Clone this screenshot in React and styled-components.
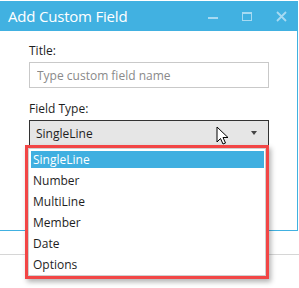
import { createGlobalStyle, styled } from "styled-components";

const GlobalStyle = createGlobalStyle`
  html, body {
    margin: 0;
    padding: 0;
    background: #ffffff;
  }
  body {
    font-family: "Open Sans", "Noto Sans", sans-serif;
    color: #1e1e1e;
  }
`;

const BLUE = "#41b1e1";

const options = ["SingleLine", "Number", "MultiLine", "Member", "Date", "Options"];

// ウィンドウ右上のボタン類
const WindowControls = () => (
  <SControls>
    <svg width="10" height="12" viewBox="0 0 10 12">
      <rect x="0" y="6" width="10" height="2" fill="#a6daf2" />
    </svg>
    <svg width="10" height="10" viewBox="0 0 10 10">
      <rect x="0.5" y="0.5" width="9" height="8" fill="none" stroke="#a6daf2" />
      <rect x="0" y="0" width="10" height="2" fill="#a6daf2" />
    </svg>
    <svg width="11" height="11" viewBox="0 0 11 11">
      <path d="M1 1 L10 10 M10 1 L1 10" stroke="#a6daf2" strokeWidth="1.8" />
    </svg>
  </SControls>
);

const Cursor = () => (
  <SCursor width="14" height="20" viewBox="0 0 14 20">
    <path
      d="M1 1 L1 16 L4.5 12.5 L7 18 L9.5 17 L7 11.5 L12 11.5 Z"
      fill="#ffffff"
      stroke="#000000"
      strokeWidth="1"
      strokeLinejoin="round"
    />
  </SCursor>
);

export default function App() {
  return (
    <>
      <GlobalStyle />
      <SPage>
        <SWindow>
          <STitleBar>
            <STitle>Add Custom Field</STitle>
            <WindowControls />
          </STitleBar>
          <SBody>
            <SLabel>Title:</SLabel>
            <SInput placeholder="Type custom field name" />
            <SLabel $top={13}>Field Type:</SLabel>
            <SSelectWrap>
              <SSelect>
                <span>SingleLine</span>
                <SArrow />
              </SSelect>
              <Cursor />
              <SDropdown>
                <SList>
                  {options.map((o, i) => (
                    <SItem key={o} $selected={i === 0}>
                      {o}
                    </SItem>
                  ))}
                </SList>
              </SDropdown>
            </SSelectWrap>
          </SBody>
        </SWindow>
        <SSeparator />
      </SPage>
    </>
  );
}

const SPage = styled.div`
  width: 299px;
  height: 288px;
  padding-top: 1px;
  box-sizing: border-box;
  overflow: hidden;
`;

const SWindow = styled.div`
  width: 298px;
  border-right: 1px solid ${BLUE};
  border-bottom: 1px solid ${BLUE};
  box-sizing: border-box;
`;

const STitleBar = styled.div`
  height: 30px;
  background: ${BLUE};
  display: flex;
  align-items: center;
  justify-content: space-between;
  padding-left: 8px;
`;

const STitle = styled.div`
  color: #ffffff;
  font-family: "Open Sans", "Noto Sans", sans-serif;
  font-size: 15px;
  line-height: 30px;
  letter-spacing: -0.2px;
`;

const SControls = styled.div`
  display: flex;
  align-items: center;
  gap: 24px;
  padding-right: 10px;
  margin-top: 1px;
`;

const SBody = styled.div`
  height: 199px;
  padding: 12px 0 0 29px;
  box-sizing: border-box;
`;

const SLabel = styled.div`
  font-size: 12px;
  line-height: 16px;
  margin-top: ${(p) => p.$top || 0}px;
  margin-bottom: 3px;
  color: #1e1e1e;
`;

const SInput = styled.input`
  display: block;
  width: 240px;
  height: 26px;
  box-sizing: border-box;
  border: 1px solid #c9c9c9;
  padding: 0 0 0 7px;
  font-family: "Open Sans", "Noto Sans", sans-serif;
  font-size: 12px;
  outline: none;
  &::placeholder {
    color: #8a8a8a;
  }
`;

const SSelectWrap = styled.div`
  position: relative;
  width: 240px;
`;

const SSelect = styled.div`
  height: 26px;
  box-sizing: border-box;
  border: 1px solid #333333;
  background: #e6e6e6;
  display: flex;
  align-items: center;
  justify-content: space-between;
  padding: 0 11px 0 6px;
  font-size: 12px;
  color: #1e1e1e;
`;

const SArrow = styled.span`
  width: 0;
  height: 0;
  border-left: 3.5px solid transparent;
  border-right: 3.5px solid transparent;
  border-top: 4px solid #444444;
`;

const SCursor = styled.svg`
  position: absolute;
  left: 187px;
  top: 6px;
`;

const SDropdown = styled.div`
  position: absolute;
  left: -4px;
  top: 25px;
  width: 244px;
  height: 134px;
  box-sizing: border-box;
  border: 3px solid #f24646;
  background: #ffffff;
  box-shadow: 2px 3px 5px rgba(0, 0, 0, 0.3);
`;

const SList = styled.div`
  height: 100%;
  box-sizing: border-box;
  border: 1px solid #d0d0d0;
  padding: 2px 1px 0 2px;
`;

const SItem = styled.div`
  height: 17px;
  line-height: 17px;
  margin-bottom: 4px;
  padding-left: 2px;
  font-size: 12px;
  color: ${(p) => (p.$selected ? "#ffffff" : "#1e1e1e")};
  background: ${(p) => (p.$selected ? "#40afe0" : "transparent")};
`;

const SSeparator = styled.div`
  margin-top: 23px;
  border-top: 1px solid #d6d6d6;
`;
